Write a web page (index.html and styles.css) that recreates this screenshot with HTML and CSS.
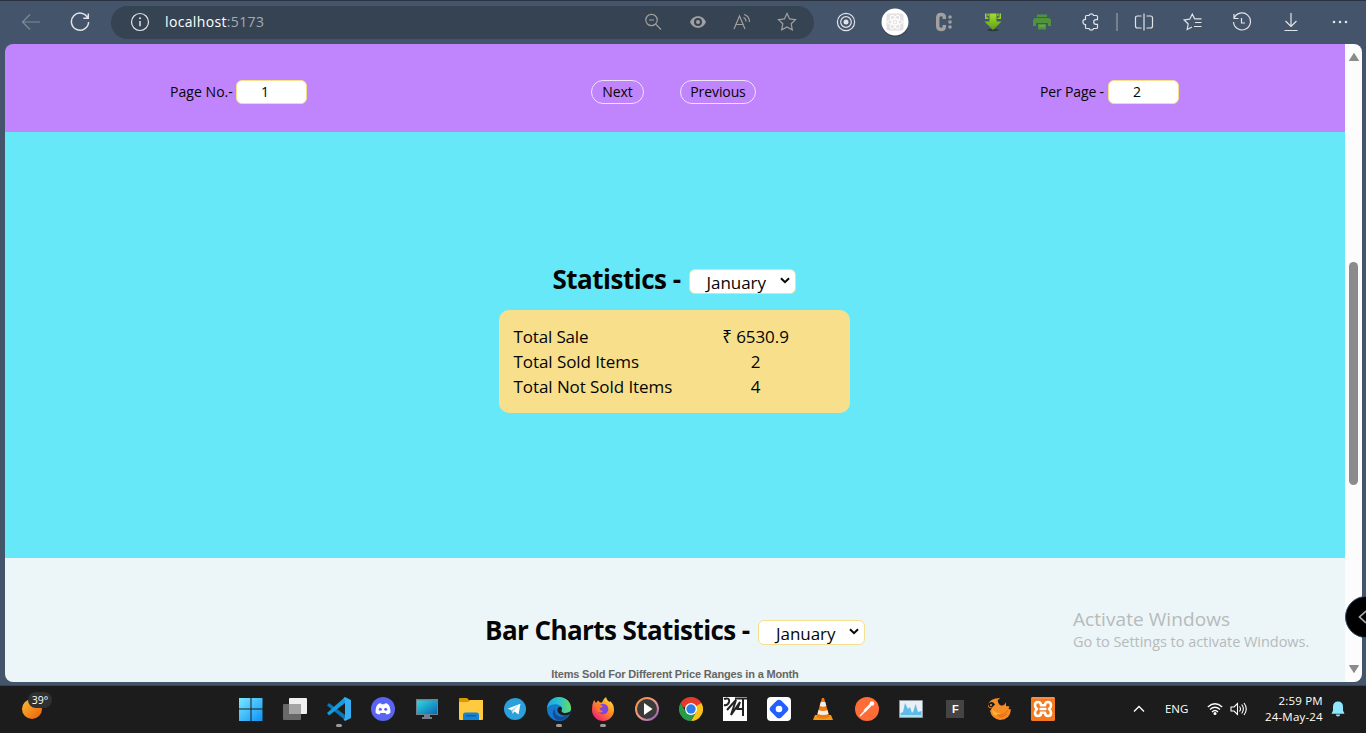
FILE: index.html
```html
<!DOCTYPE html>
<html lang="en">
<head>
<meta charset="utf-8">
<title>localhost:5173</title>
<link rel="stylesheet" href="styles.css">
</head>
<body>
<div class="desktop">
  <header class="toolbar">
    <span class="slot dim"><svg width="20" height="20" viewBox="0 0 20 20"><path d="M19 10H1.500M9 2.500L1.500 10L9 17.500"/></svg></span>
    <span class="slot"><svg width="20" height="20" viewBox="0 0 20 20"><path class="thick" d="M17.800 6A8.600 8.600 0 1 0 18.600 10M18.300 1.500V6.300H13.300"/></svg></span>
    <div class="address">
      <svg class="info" width="20" height="20" viewBox="0 0 20 20"><circle cx="10" cy="10" r="8.500"/><path class="thick" d="M10 9V14.300"/><circle class="dot" cx="10" cy="6.300" r="1"/></svg>
      <span class="url">localhost<span class="port">:5173</span></span>
      <span class="aslot"><svg width="18" height="18" viewBox="0 0 18 18"><circle cx="7.500" cy="7" r="5.700"/><path d="M5 7H10M11.700 11.200L17 16.500"/></svg></span>
      <span class="aslot"><svg width="18" height="18" viewBox="0 0 18 18"><path class="solid" fill-rule="evenodd" d="M1 9C3 4.700 6 3.300 9 3.300S15 4.700 17 9C15 13.300 12 14.700 9 14.700S3 13.300 1 9ZM9 5A4 4 0 1 0 9 13A4 4 0 1 0 9 5ZM9 7A2 2 0 1 1 9 11A2 2 0 1 1 9 7Z"/></svg></span>
      <span class="aslot"><svg width="18" height="18" viewBox="0 0 18 18"><path d="M1 16L6.500 3L12 16M3 11.500H10M10.500 4.500Q13 5.500 13 8.500M11 1.500Q16.500 3 16.500 9"/></svg></span>
      <span class="aslot"><svg width="20" height="20" viewBox="0 0 20 20"><path d="M10 1.500L12.600 6.900L18.500 7.700L14.200 11.800L15.300 17.800L10 15L4.700 17.800L5.800 11.800L1.500 7.700L7.400 6.900Z"/></svg></span>
    </div>
    <span class="slot"><svg width="20" height="20" viewBox="0 0 20 20"><circle cx="10" cy="10" r="8.600"/><circle cx="10" cy="10" r="5.300"/><circle class="dot" cx="10" cy="10" r="2.500"/></svg></span>
    <span class="slot"><svg width="30" height="30" viewBox="0 0 30 30"><circle cx="15" cy="16" r="13.600" fill="#2f3b4a" stroke="none"/><circle cx="15" cy="15" r="13.500" fill="#fff" stroke="none"/><rect x="6.500" y="6.500" width="17" height="17" rx="2" fill="#e2e2e2" stroke="none"/><g class="atom"><ellipse cx="15" cy="15" rx="7.500" ry="2.800"/><ellipse cx="15" cy="15" rx="7.500" ry="2.800" transform="rotate(60 15 15)"/><ellipse cx="15" cy="15" rx="7.500" ry="2.800" transform="rotate(120 15 15)"/><circle cx="15" cy="15" r="1"/></g></svg></span>
    <span class="slot"><svg width="20" height="20" viewBox="0 0 20 20"><path class="cmark" d="M10.300 7V5Q10.300 2.500 7 2.500Q3.700 2.500 3.700 6V14Q3.700 17.500 7 17.500Q10.300 17.500 10.300 15V13"/><g fill="#a3a19f" stroke="none"><circle cx="16" cy="5" r="1.800"/><circle cx="16" cy="10" r="1.800"/><circle cx="16" cy="15" r="1.800"/></g></svg></span>
    <span class="slot"><svg width="20" height="20" viewBox="0 0 20 20"><defs><linearGradient id="dl" x2="0" y2="1"><stop stop-color="#a4e02c"/><stop offset="1" stop-color="#5f9d15"/></linearGradient></defs><ellipse cx="10" cy="18" rx="6" ry="1.200" fill="#2c3a38" stroke="none"/><path fill="url(#dl)" stroke="none" d="M6.500 1.500H13.500V9.500H18.500L10 18L1.500 9.500H6.500ZM2 1.500H3.500V5.500H5.500V7H2ZM18 1.500H16.500V5.500H14.500V7H18ZM4.500 1.500H5.700V4.300H4.500ZM15.500 1.500H14.300V4.300H15.500Z"/></svg></span>
    <span class="slot"><svg width="20" height="20" viewBox="0 0 20 20"><g fill="#4f943c" stroke="none"><path d="M5 2.500H15V5H5ZM4 6H16Q19 6 19 9V14H16V11H4V14H1V9Q1 6 4 6ZM6 12H14V17.500H6Z"/><path fill="#7fae72" d="M7 13.500H13V14.500H7Z"/></g></svg></span>
    <span class="slot"><svg width="20" height="20" viewBox="0 0 20 20"><path d="M6.500 3.500H8A2.400 2.400 0 0 1 12.600 3.500H15.500Q16.500 3.500 16.500 4.500V7.700H15A2.300 2.300 0 0 0 15 12.300H16.500V15.500Q16.500 16.500 15.500 16.500H12.600A2.400 2.400 0 0 1 8 16.500H5.500Q4.500 16.500 4.500 15.500V12.600A2.600 2.600 0 0 1 4.500 7.400V4.500Q4.500 3.500 5.500 3.500Z"/></svg></span>
    <i class="divider"></i>
    <span class="slot"><svg width="20" height="20" viewBox="0 0 20 20"><path d="M10 1.500V18.500M7.500 4H3.500Q1.500 4 1.500 6V14Q1.500 16 3.500 16H7.500M12.500 4H16.500Q18.500 4 18.500 6V14Q18.500 16 16.500 16H12.500"/></svg></span>
    <span class="slot"><svg width="20" height="20" viewBox="0 0 20 20"><path d="M12.500 6.800L11.500 6.600L9.300 2L6.700 7.200L1.200 8L5.200 12L4.200 17.500L9 15M12.500 6.800H18.500M12 10.500H18.500M11 14.500H18.500"/></svg></span>
    <span class="slot"><svg width="20" height="20" viewBox="0 0 20 20"><path d="M2 2V6.500H6.500M2 6.500A8.500 8.500 0 1 1 1.500 10M9.500 6V11H13"/></svg></span>
    <span class="slot"><svg width="20" height="20" viewBox="0 0 20 20"><path d="M10 1V14.500M4.500 9L10 14.500L15.500 9M3.500 18.500H16.500"/></svg></span>
    <span class="slot"><svg width="20" height="20" viewBox="0 0 20 20"><g class="dots"><circle cx="4" cy="10" r="1.300"/><circle cx="10" cy="10" r="1.300"/><circle cx="16" cy="10" r="1.300"/></g></svg></span>
  </header>

  <div class="viewport">
    <main class="page">
      <nav class="pager">
        <label class="field"><span class="fieldname pageno">Page No.-</span><input class="number one" value="1"></label>
        <div class="buttons"><button class="pill next">Next</button><button class="pill prev">Previous</button></div>
        <label class="field"><span class="fieldname perpage">Per Page -</span><input class="number" value="2"></label>
      </nav>
      <section class="stats">
        <div class="heading"><h1 class="title stat-title">Statistics -</h1><div class="select"><span>January</span><svg width="10" height="7" viewBox="0 0 10 7"><path d="M1 1.200L5 5.200L9 1.200"/></svg></div></div>
        <div class="card">
          <div class="row"><span class="r1">Total Sale</span><span class="value amount">₹ 6530.9</span></div>
          <div class="row"><span class="r2">Total Sold Items</span><span class="value">2</span></div>
          <div class="row"><span class="r3">Total Not Sold Items</span><span class="value">4</span></div>
        </div>
      </section>
      <section class="charts">
        <div class="heading"><h1 class="title bar-title">Bar Charts Statistics -</h1><div class="select"><span>January</span><svg width="10" height="7" viewBox="0 0 10 7"><path d="M1 1.200L5 5.200L9 1.200"/></svg></div></div>
        <p class="caption">Items Sold For Different Price Ranges in a Month</p>
      </section>
    </main>
    <aside class="scrollbar">
      <svg width="12" height="10" viewBox="0 0 12 10"><path d="M6 .8L11 8.500Q11 9 10 9H2Q1 9 1 8.500Z"/></svg>
      <i class="thumb"></i>
      <svg width="12" height="10" viewBox="0 0 12 10"><path d="M6 9.200L1 1.500Q1 1 2 1H10Q11 1 11 1.500Z"/></svg>
    </aside>
  </div>

  <div class="activate"><div class="act-title">Activate Windows</div><div class="act-text">Go to Settings to activate Windows.</div></div>
  <div class="edge-handle"><svg width="8" height="14" viewBox="0 0 8 14"><path d="M8 1L1.500 7L8 13"/></svg></div>

  <footer class="taskbar">
    <div class="weather"><svg width="22" height="22" viewBox="0 0 22 22"><defs><linearGradient id="sun" x2="1" y2="1"><stop stop-color="#f8bd35"/><stop offset="1" stop-color="#ef5d08"/></linearGradient></defs><circle cx="11" cy="11" r="10" fill="url(#sun)"/></svg><span class="temp">39°</span></div>
    <div class="apps">
      <span class="app"><svg width="24" height="24" viewBox="0 0 24 24"><defs><linearGradient id="win" x2="1" y2="1"><stop stop-color="#7ae9ff"/><stop offset="1" stop-color="#0c91f5"/></linearGradient></defs><path fill="url(#win)" d="M0 1H11.500V11.500H0ZM12.500 1H23.500V11.500H12.500ZM0 12.500H11.500V24H0ZM12.500 12.500H23.500V24H12.500Z"/></svg></span>
      <span class="app"><svg width="24" height="24" viewBox="0 0 24 24"><rect x="6" y="1" width="18" height="16" rx="1" fill="#f0f0f0"/><rect y="7" width="18" height="16" rx="1" fill="#686868"/><path fill="#a5a5a5" d="M6 7H18V17H6Z"/></svg></span>
      <span class="app running"><svg width="24" height="24" viewBox="0 0 24 24"><path fill="#0878b9" d="M2 6L18 18V23L0 8.500Z"/><path fill="#159be0" d="M0 16L18 0V6L2 18.500Z"/><path fill="#35adf2" d="M18 0L24 3V21L18 24L16.500 22.500L18 21V3L16.500 1.500Z"/></svg></span>
      <span class="app"><svg width="24" height="24" viewBox="0 0 24 24"><circle cx="12" cy="12" r="12" fill="#5865f2"/><path fill="#fff" d="M8 6.500L10 6.200L10.500 7.200H13.500L14 6.200L16 6.500Q19.500 8 19.500 15.500Q18 17.500 15.500 17.500L14.500 16H9.500L8.500 17.500Q6 17.500 4.500 15.500Q4.500 8 8 6.500Z"/><circle cx="9.300" cy="12.300" r="1.500" fill="#5865f2"/><circle cx="14.700" cy="12.300" r="1.500" fill="#5865f2"/></svg></span>
      <span class="app"><svg width="24" height="24" viewBox="0 0 24 24"><defs><linearGradient id="pc" x2="1" y2="1"><stop stop-color="#30d8df"/><stop offset="1" stop-color="#0868b7"/></linearGradient></defs><path fill="#75808a" d="M1 2H23V18H1ZM9 18H15V20H17V22H7V20H9Z"/><path fill="url(#pc)" d="M2 3.500H22V17H2Z"/></svg></span>
      <span class="app"><svg width="24" height="24" viewBox="0 0 24 24"><path fill="#dd9700" d="M0 2Q0 1 1 1H8L11 4V8H0Z"/><path fill="#ffca3f" d="M0 5H9L11 3H24V22Q24 23 23 23H1Q0 23 0 22Z"/><path fill="#1384d5" d="M4 23V18Q4 15.500 6.500 15.500H17.500Q20 15.500 20 18V23Z"/><path fill="#0763b0" d="M7 18H17V19.500H7Z"/></svg></span>
      <span class="app"><svg width="24" height="24" viewBox="0 0 24 24"><circle cx="12" cy="12" r="11" fill="#2aa1dc"/><path fill="#fff" d="M4.500 11.800L17.500 6.700L15.500 17.500L11.500 14.500L9.500 16.800L8.500 13Z"/><path fill="#a8cee3" d="M8.500 13L15 8.600L10.300 14L9.500 16.800Z"/></svg></span>
      <span class="app running"><svg width="24" height="24" viewBox="0 0 24 24"><defs><linearGradient id="edge" x2="1"><stop stop-color="#20a4e8"/><stop offset=".5" stop-color="#2bc3cf"/><stop offset="1" stop-color="#69dc5e"/></linearGradient></defs><circle cx="12" cy="12" r="12" fill="#1478cc"/><path fill="url(#edge)" d="M0 11C1 4 6 0 12 0C19 0 24 5 24 11C24 16 19 17 15 15.500C14 15 14.500 14 15 12C15 7 5 5 0 11Z"/><path fill="#134e9d" d="M8 12C7 19 14 22 22 17.500C18 25 8 26 6 18C5.500 15 6 13 8 12Z"/><path fill="#1c1c1c" d="M12 10Q15 9 15 12Q13.500 14.500 16 15.700Q20 17 24 14L22.500 17.500Q15 20 11.500 16Q9 12 12 10Z"/></svg></span>
      <span class="app running"><svg width="24" height="24" viewBox="0 0 24 24"><defs><linearGradient id="ff" x1="1" x2=".2" y2="1"><stop stop-color="#fff24a"/><stop offset=".5" stop-color="#ff8b22"/><stop offset="1" stop-color="#f2177a"/></linearGradient></defs><path fill="url(#ff)" d="M3 3L5 6L7 3.500L9 5.500H11Q12 2 15 0Q16 4 19 5V4Q23 7 23 13A11 11 0 0 1 1 13Q1 7 3 3Z"/><circle cx="12" cy="12" r="5.300" fill="#8146de"/><path fill="#ff7b20" d="M4 8Q7 6 12 9Q11 11 8.500 11.200Q9 14 12 14.500Q8 17 5.500 13Z"/></svg></span>
      <span class="app"><svg width="24" height="24" viewBox="0 0 24 24"><defs><linearGradient id="media" x2="1" y2="1"><stop stop-color="#f28b35"/><stop offset=".5" stop-color="#e9a18e"/><stop offset="1" stop-color="#9254ce"/></linearGradient></defs><circle cx="12" cy="12" r="11" fill="#3a3a3a" stroke="url(#media)" stroke-width="2"/><path fill="#fff" d="M9 6L17.500 12L9 18Z"/></svg></span>
      <span class="app"><svg width="24" height="24" viewBox="0 0 24 24"><path fill="#e33b2e" d="M1.600 6A12 12 0 0 1 22.400 6L12 12Z"/><path fill="#fbc116" d="M22.400 6A12 12 0 0 1 12 24L17 15L12 6Z"/><path fill="#299b48" d="M12 24A12 12 0 0 1 1.600 6L7 15L17 15Z"/><path fill="#e33b2e" d="M12 6H22.400L12 12L4 10L1.600 6Z"/><circle cx="12" cy="12" r="6" fill="#fff"/><circle cx="12" cy="12" r="4.700" fill="#2e7de9"/></svg></span>
      <span class="app"><svg width="24" height="24" viewBox="0 0 24 24"><path fill="#fff" d="M0 0H24V24H0Z"/><path fill="none" stroke="#222" stroke-width="2" d="M1 2Q7 0 6 5Q5 9 1 8M4 13L13 3L8 18L17 5L14.500 12H20M12 1.500H24M20 1.500V19"/></svg></span>
      <span class="app"><svg width="24" height="24" viewBox="0 0 24 24"><rect width="24" height="24" rx="4" fill="#fff"/><rect x="4.500" y="4.500" width="15" height="15" rx="3.500" transform="rotate(45 12 12)" fill="#235fff"/><circle cx="12" cy="12" r="3.300" fill="#fff"/></svg></span>
      <span class="app"><svg width="24" height="24" viewBox="0 0 24 24"><path fill="#f49a18" d="M4 18H20L22 23H2Z"/><path fill="#f27a0a" d="M11 1H13L18.500 20Q12 23 5.500 20Z"/><path fill="#eee" d="M9.800 5H14.200L15.400 9Q12 10.500 8.600 9ZM7.500 13Q12 15 16.500 13L17.500 17Q12 19 6.500 17Z"/></svg></span>
      <span class="app"><svg width="24" height="24" viewBox="0 0 24 24"><circle cx="12" cy="12" r="12" fill="#ff6c37"/><path stroke="#fff" stroke-width="2.600" stroke-linecap="round" d="M10 13.500L15 8.500"/><circle cx="17" cy="6.500" r="2.300" fill="#fff"/><path stroke="#fff" stroke-width="1.500" d="M5 19L11 13"/></svg></span>
      <span class="app"><svg width="24" height="24" viewBox="0 0 24 24"><path fill="#e9f0f5" stroke="#8c969e" d="M.5 3.500H23.500V20.500H.5Z"/><path fill="#5ebbe9" d="M1.500 20V16L4 15L6 6L9 12L11 10L13 16L14.500 14L16.500 7L19 15L22.500 14V20Z"/><path fill="#b4dcf0" d="M1.500 20V18H22.500V20Z"/></svg></span>
      <span class="app"><span class="f-icon">F</span></span>
      <span class="app"><svg width="24" height="24" viewBox="0 0 24 24"><path fill="#f78c22" d="M1 8Q3 1 13 1Q10 4 13 8Q17 10 19 5V9L22.500 9.500L21.500 12L24 12.500Q23 23 13 23Q5 22 3 14L5 11Q1 12 1 8Z"/><path fill="#ffb43a" d="M5 12Q9 17 14 16Q9 20 6 17Z"/><path fill="none" stroke="#df6815" d="M10 18Q17 19 21 13M12 20Q17 20 20 17"/><path fill="#171b19" d="M1 7Q5 3 8 7.500L5 10.500Q2 11 1 7ZM11 2.500L14 3L15.500 6L13 8Q10 5 11 2.500Z"/><circle cx="4" cy="8" r="1" fill="#ff9628"/></svg></span>
      <span class="app"><svg width="24" height="24" viewBox="0 0 24 24"><rect width="24" height="24" rx="1.500" fill="#f4791f"/><path fill="none" stroke="#f9a365" d="M.5 1H23.500"/><path fill="none" stroke="#fff" stroke-width="2.600" stroke-linejoin="round" d="M12 8.300H14Q14 5 17 5Q20 5 20 8.500Q20 10.500 18 12Q20 13.500 20 16Q20 19 17 19Q14 19 14 15.800H10Q10 19 7 19Q4 19 4 16Q4 13.500 6 12Q4 10.500 4 8.500Q4 5 7 5Q10 5 10 8.300ZM8.500 12H15.500"/></svg></span>
    </div>
    <div class="tray">
      <svg class="up" width="12" height="8" viewBox="0 0 12 8"><path d="M1 6.500L6 1.500L11 6.500"/></svg>
      <span class="lang">ENG</span>
      <svg class="wifi" width="16" height="14" viewBox="0 0 16 14"><path d="M.8 5Q8-1.500 15.200 5M3 7.500Q8 3 13 7.500M5 10Q8 7 11 10"/><circle cx="8" cy="11.500" r="1.500"/></svg>
      <svg class="sound" width="18" height="14" viewBox="0 0 18 14"><path d="M1 5H4L7.500 1.500V12.500L4 9H1ZM9.500 4.500Q11.500 7 9.500 9.500M11.700 2.500Q15 7 11.700 11.500M14 1Q18.500 7 14 13"/></svg>
      <div class="clock"><div class="time">2:59 PM</div><div class="date">24-May-24</div></div>
      <svg class="bell" width="14" height="16" viewBox="0 0 14 16"><path d="M7 .5Q12 .5 12 6V9.500L13.500 12.700H.5L2 9.500V6Q2 .5 7 .5ZM4.800 13.500H9.200Q9 15.500 7 15.500T4.800 13.500Z"/></svg>
    </div>
  </footer>
</div>
</body>
</html>
```

FILE: styles.css
```css
* { box-sizing: border-box; }
body { margin: 0; overflow: hidden; font-family: "Open Sans", "Noto Sans", sans-serif; color: #050505; }
.desktop { position: relative; width: 1366px; height: 733px; background: #44546a; display: flex; flex-direction: column; }
svg { display: block; flex: none; }

.toolbar { height: 44px; flex: none; display: flex; align-items: center; padding: 0 0 1px 6px; border-top: 1px solid #2b3342; }
.toolbar svg { fill: none; stroke: #e2e4e8; stroke-width: 1.2; }
.toolbar .thick { stroke-width: 1.5; }
.toolbar .dot, .toolbar .dots { fill: #e2e4e8; stroke: none; }
.slot { width: 49px; flex: none; display: flex; justify-content: center; }
.toolbar .dim svg { stroke: #808998; }
.address { width: 703px; height: 33px; margin: 0 7.5px 0 7px; border-radius: 17px; background: #364353; display: flex; align-items: center; padding: 0 4.500px 0 19px; flex: none; }
.url { flex: 1; margin-left: 15px; color: #fff; font-size: 14px; line-height: 20px; letter-spacing: .35px; }
.port { color: #a5abb3; }
.aslot { width: 44.7px; display: flex; justify-content: center; }
.toolbar .aslot svg { stroke: #a1a19f; stroke-width: 1.2; }
.toolbar .solid { fill: #a1a19f; stroke: none; }
.toolbar .cmark { stroke: #a3a19f; stroke-width: 3.4; }
.toolbar .atom { stroke: #fff; stroke-width: 1; }
.divider { width: 2px; height: 18px; margin: 0 1px 0 .5px; background: #76808e; flex: none; }

.viewport { height: 638px; width: 1357px; flex: none; margin-left: 5px; border-radius: 8px; overflow: hidden; display: flex; }
.page { width: 1340px; display: flex; flex-direction: column; }
.pager { height: 88px; flex: none; padding: 8px 166px 0 165px; background: #c084fc; display: flex; align-items: center; justify-content: space-between; font-size: 14px; }
.field { display: flex; align-items: center; }
.fieldname { white-space: nowrap; line-height: 18px; padding-bottom: 1px; }
.pageno { width: 66px; letter-spacing: .05px; }
.perpage { width: 68px; letter-spacing: -.15px; }
.number { width: 71px; height: 24px; border: 1px solid #f8de8b; border-radius: 6px; background: #fff; padding: 0 0 1px 24px; font: 14px "Open Sans", sans-serif; color: #050505; }
.buttons { display: flex; gap: 36px; }
.pill { height: 24px; border: 1px solid #efe4fb; border-radius: 12px; background: transparent; padding: 0; font: 14px/20px "Open Sans", sans-serif; color: #050505; letter-spacing: -.1px; }
.next { width: 53px; }
.prev { width: 76px; }
.stats { height: 426px; flex: none; padding: 130px 2px 0 0; background: #67e8f9; display: flex; flex-direction: column; align-items: center; }
.heading { height: 36px; display: flex; justify-content: center; align-items: center; }
.title { margin: 0; font-size: 26px; line-height: 34px; padding-bottom: 2px; font-weight: 700; white-space: nowrap; }
.stat-title { width: 136px; letter-spacing: -.5px; }
.bar-title { width: 273px; letter-spacing: -.58px; }
.select { width: 107px; height: 25px; margin-top: 3px; border: 1px solid #f6de8f; border-radius: 6px; background: #fff; display: flex; align-items: center; justify-content: space-between; padding: 2px 5px 0 17px; font-size: 17px; line-height: 22px; letter-spacing: -.05px; }
.select svg { margin-top: -5px; fill: none; stroke: #080808; stroke-width: 2; }
.card { width: 351px; height: 103px; margin-top: 12px; padding: 14px 15px; border-radius: 10px; background: #f7df8b; }
.row { height: 25px; display: flex; justify-content: space-between; font-size: 17px; line-height: 25px; white-space: nowrap; }
.row > span { letter-spacing: -.07px; }
.row > .r1 { letter-spacing: -.15px; }
.value { width: 158px; text-align: center; }
.charts { flex: 1; padding-top: 55px; background: #ecf5f7; }
.caption { margin: 19px 0 0; text-align: center; font: bold 11px/13px "Liberation Sans", Arial, sans-serif; letter-spacing: -.17px; color: #666; }
.scrollbar { width: 17px; background: #fcfcfc; display: flex; flex-direction: column; align-items: center; padding: 8px 0; }
.scrollbar svg { fill: #8b8b8b; }
.thumb { width: 9px; height: 223px; margin: 200px 0 auto; border-radius: 5px; background: #8b8b8b; }

.activate { position: absolute; left: 1073px; top: 606px; color: #b6bbbc; white-space: nowrap; }
.act-title { font-size: 19px; line-height: 26px; letter-spacing: .07px; }
.act-text { font-size: 14.5px; line-height: 20px; letter-spacing: -.04px; }
.edge-handle { position: absolute; right: -21px; top: 596px; width: 42px; height: 42px; border-radius: 50%; background: #000; border: 1px solid #36536a; display: flex; align-items: center; padding-left: 12px; }
.edge-handle svg { fill: none; stroke: #aaa; stroke-width: 1.7; }

.taskbar { height: 48px; margin-top: 3px; flex: none; background: #1c1c1c; border-top: 1px solid #3e4347; padding-bottom: 2px; display: flex; align-items: center; color: #fff; }
.weather { position: relative; width: 228.5px; padding-left: 21px; }
.temp { position: absolute; left: 28px; top: -6px; width: 24px; height: 16px; border-radius: 8px; background: #303030; font-size: 10.5px; line-height: 16px; text-align: center; }
.apps { display: flex; }
.app { position: relative; width: 44.05px; height: 45px; display: flex; align-items: center; justify-content: center; }
.running::after { content: ""; position: absolute; bottom: 4px; width: 6px; height: 3px; border-radius: 2px; background: #9b9b9b; }
.f-icon { width: 18px; height: 18px; background: #444; font: bold 11px/18px "Liberation Sans", sans-serif; text-align: center; }
.tray { flex: 1; display: flex; align-items: center; padding-left: 67.5px; font-size: 11.5px; }
.tray svg { fill: none; stroke: #fff; stroke-width: 1.3; }
.lang { width: 24px; margin: 0 18px 0 20px; }
.tray .sound { margin-left: 7px; stroke-width: 1.1; }
.clock { width: 75px; text-align: right; line-height: 16px; white-space: nowrap; letter-spacing: .2px; }
.tray .bell { margin-left: 8px; fill: #8fe7ff; stroke: none; }
.wifi circle { fill: #fff; stroke: none; }
```
